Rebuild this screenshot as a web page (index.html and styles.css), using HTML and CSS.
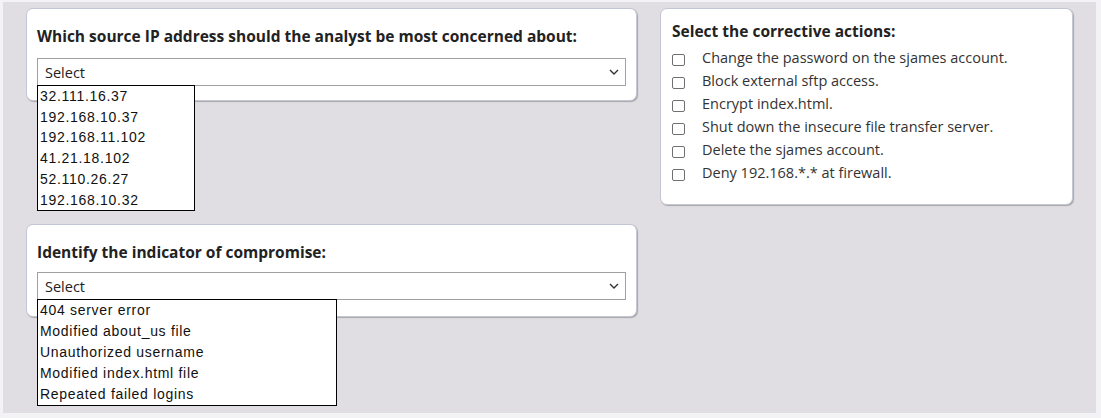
FILE: index.html
```html
<!DOCTYPE html>
<html lang="en">
  <head>
    <meta charset="UTF-8" />
    <meta name="viewport" content="width=device-width, initial-scale=1.0" />
    <title>Incident Response</title>
    <link rel="stylesheet" href="styles.css">
  </head>
  <body>
    <div class="page">
      <div class="column left">
        <div class="card question">
          <h3>Which source IP address should the analyst be most concerned about:</h3>
          <div class="select-wrap">
            <div class="select-box">
              <span>Select</span>
              <svg class="chevron" width="10" height="6" viewBox="0 0 10 6">
                <path d="M1 1 L5 5 L9 1" fill="none" stroke="#333" stroke-width="1.4" />
              </svg>
            </div>
            <ul class="options ip">
              <li>32.111.16.37</li>
              <li>192.168.10.37</li>
              <li>192.168.11.102</li>
              <li>41.21.18.102</li>
              <li>52.110.26.27</li>
              <li>192.168.10.32</li>
            </ul>
          </div>
        </div>

        <div class="card question second">
          <h3>Identify the indicator of compromise:</h3>
          <div class="select-wrap">
            <div class="select-box">
              <span>Select</span>
              <svg class="chevron" width="10" height="6" viewBox="0 0 10 6">
                <path d="M1 1 L5 5 L9 1" fill="none" stroke="#333" stroke-width="1.4" />
              </svg>
            </div>
            <ul class="options ioc">
              <li>404 server error</li>
              <li>Modified about_us file</li>
              <li>Unauthorized username</li>
              <li>Modified index.html file</li>
              <li>Repeated failed logins</li>
            </ul>
          </div>
        </div>
      </div>

      <div class="column right">
        <div class="card actions">
          <h3>Select the corrective actions:</h3>
          <label class="action"><span class="box"></span>Change the password on the sjames account.</label>
          <label class="action"><span class="box"></span>Block external sftp access.</label>
          <label class="action"><span class="box"></span>Encrypt index.html.</label>
          <label class="action"><span class="box"></span>Shut down the insecure file transfer server.</label>
          <label class="action"><span class="box"></span>Delete the sjames account.</label>
          <label class="action"><span class="box"></span>Deny 192.168.*.* at firewall.</label>
        </div>
      </div>
    </div>
  </body>
</html>
```

FILE: styles.css
```css
body {
  font-family: "Open Sans", Arial, sans-serif;
  background-color: #f3f3f5;
  margin: 0;
  padding: 0;
  color: #222;
}
.page {
  width: 1093px;
  height: 411px;
  margin: 2px 0 0 3px;
  padding: 6px 0 0 23px;
  box-sizing: border-box;
  background-color: #e0dee3;
  display: flex;
  gap: 23px;
}
.column {
  display: flex;
  flex-direction: column;
}
.left {
  width: 611px;
  gap: 123px;
}
.right {
  width: 413px;
}
.card {
  background-color: #fff;
  border: 1px solid #c3c6d3;
  border-radius: 7px;
  box-shadow: 1px 1px 1px rgba(0, 0, 0, 0.25);
  box-sizing: border-box;
}
h3 {
  font-size: 15.5px;
  font-weight: 700;
  line-height: 20px;
  margin: 0;
}
.question {
  height: 93px;
  padding: 17px 10px 0 10px;
}
.question h3 {
  margin-bottom: 12px;
}
.question.second h3 {
  margin-bottom: 10px;
}
.select-wrap {
  position: relative;
}
.select-box {
  height: 28px;
  border: 1px solid #a0a0a0;
  box-sizing: border-box;
  display: flex;
  align-items: center;
  justify-content: space-between;
  padding: 0 6px 0 7px;
  font-size: 14.5px;
  color: #222;
}
.chevron {
  display: block;
}
/* open dropdown list, drawn over the card below */
.options {
  position: absolute;
  top: 27px;
  left: 0;
  z-index: 10;
  margin: 0;
  padding: 0;
  list-style: none;
  background-color: #fff;
  border: 1px solid #000;
  font-family: "Liberation Sans", Arial, sans-serif;
  font-size: 14px;
  letter-spacing: 0.7px;
  line-height: 21px;
  color: #111;
}
.options li {
  padding-left: 2px;
}
.options.ip {
  width: 156px;
  line-height: 20.7px;
}
.options.ioc {
  width: 298px;
}
.actions {
  height: 197px;
  padding: 12px 10px 0 11px;
}
.actions h3 {
  margin-bottom: 5px;
}
.action {
  display: flex;
  align-items: center;
  height: 23px;
  font-size: 14.5px;
  color: #333;
}
.box {
  width: 13px;
  height: 12px;
  border: 1px solid #707070;
  border-radius: 2px;
  box-sizing: border-box;
  margin: 4px 17px 0 0;
}
```
